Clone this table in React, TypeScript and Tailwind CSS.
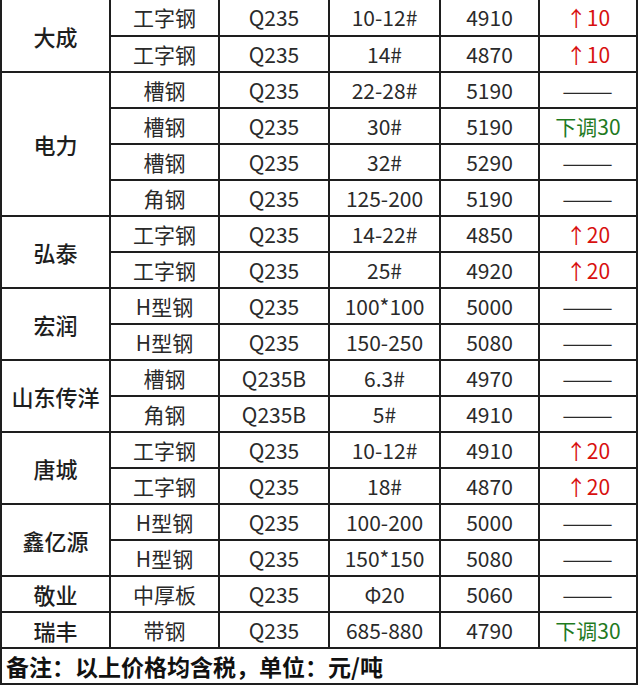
type Row = { name: string; spec: string; size: string; price: string; change: string };

const groups: { company: string; rows: Row[] }[] = [
  {
    company: "大成",
    rows: [
      { name: "工字钢", spec: "Q235", size: "10-12#", price: "4910", change: "↑10" },
      { name: "工字钢", spec: "Q235", size: "14#", price: "4870", change: "↑10" },
    ],
  },
  {
    company: "电力",
    rows: [
      { name: "槽钢", spec: "Q235", size: "22-28#", price: "5190", change: "——" },
      { name: "槽钢", spec: "Q235", size: "30#", price: "5190", change: "下调30" },
      { name: "槽钢", spec: "Q235", size: "32#", price: "5290", change: "——" },
      { name: "角钢", spec: "Q235", size: "125-200", price: "5190", change: "——" },
    ],
  },
  {
    company: "弘泰",
    rows: [
      { name: "工字钢", spec: "Q235", size: "14-22#", price: "4850", change: "↑20" },
      { name: "工字钢", spec: "Q235", size: "25#", price: "4920", change: "↑20" },
    ],
  },
  {
    company: "宏润",
    rows: [
      { name: "H型钢", spec: "Q235", size: "100*100", price: "5000", change: "——" },
      { name: "H型钢", spec: "Q235", size: "150-250", price: "5080", change: "——" },
    ],
  },
  {
    company: "山东传洋",
    rows: [
      { name: "槽钢", spec: "Q235B", size: "6.3#", price: "4970", change: "——" },
      { name: "角钢", spec: "Q235B", size: "5#", price: "4910", change: "——" },
    ],
  },
  {
    company: "唐城",
    rows: [
      { name: "工字钢", spec: "Q235", size: "10-12#", price: "4910", change: "↑20" },
      { name: "工字钢", spec: "Q235", size: "18#", price: "4870", change: "↑20" },
    ],
  },
  {
    company: "鑫亿源",
    rows: [
      { name: "H型钢", spec: "Q235", size: "100-200", price: "5000", change: "——" },
      { name: "H型钢", spec: "Q235", size: "150*150", price: "5080", change: "——" },
    ],
  },
  {
    company: "敬业",
    rows: [{ name: "中厚板", spec: "Q235", size: "Φ20", price: "5060", change: "——" }],
  },
  {
    company: "瑞丰",
    rows: [{ name: "带钢", spec: "Q235", size: "685-880", price: "4790", change: "下调30" }],
  },
];

const cell = "flex items-center justify-center bg-white text-[21px]";
const ink = "text-[#2a2a2a]";

function Change({ value }: { value: string }) {
  if (value === "——") {
    // em dashes are narrow in this font; stretch them to the width in the picture
    return (
      <div className={`${cell} ${ink}`}>
        <span className="inline-block scale-x-[1.45]">——</span>
      </div>
    );
  }
  const color = value.startsWith("↑") ? "text-[#d81010]" : "text-[#1f7a1f]";
  return <div className={`${cell} ${color}`}>{value}</div>;
}

export default function App() {
  const spans = ["row-span-1", "row-span-2", "row-span-3", "row-span-4"];
  return (
    <div
      className="h-[686px] w-[640px] overflow-hidden bg-white"
      style={{ fontFamily: '"Noto Sans CJK SC", "Noto Sans", sans-serif' }}
    >
      <div className="grid w-[638px] grid-cols-[107px_107px_108px_109px_97px_96px] grid-rows-[35px_repeat(18,34px)] gap-[2px] bg-[#1e1e1e] px-[2px] pb-[2px] leading-none">
        {groups.map((g) => (
          <>
            <div key={g.company} className={`${cell} ${spans[g.rows.length - 1]} text-[22px] font-medium text-[#1e1e1e]`}>
              {g.company}
            </div>
            {g.rows.map((r, i) => (
              <>
                <div key={g.company + i + "a"} className={`${cell} ${ink}`}>{r.name}</div>
                <div key={g.company + i + "b"} className={`${cell} ${ink}`}>{r.spec}</div>
                <div key={g.company + i + "c"} className={`${cell} ${ink}`}>{r.size}</div>
                <div key={g.company + i + "d"} className={`${cell} ${ink}`}>{r.price}</div>
                <Change key={g.company + i + "e"} value={r.change} />
              </>
            ))}
          </>
        ))}
        <div className="col-span-6 flex items-center bg-white pl-[4px] text-[23px] font-bold text-[#111]">
          备注：以上价格均含税，单位：元/吨
        </div>
      </div>
    </div>
  );
}
